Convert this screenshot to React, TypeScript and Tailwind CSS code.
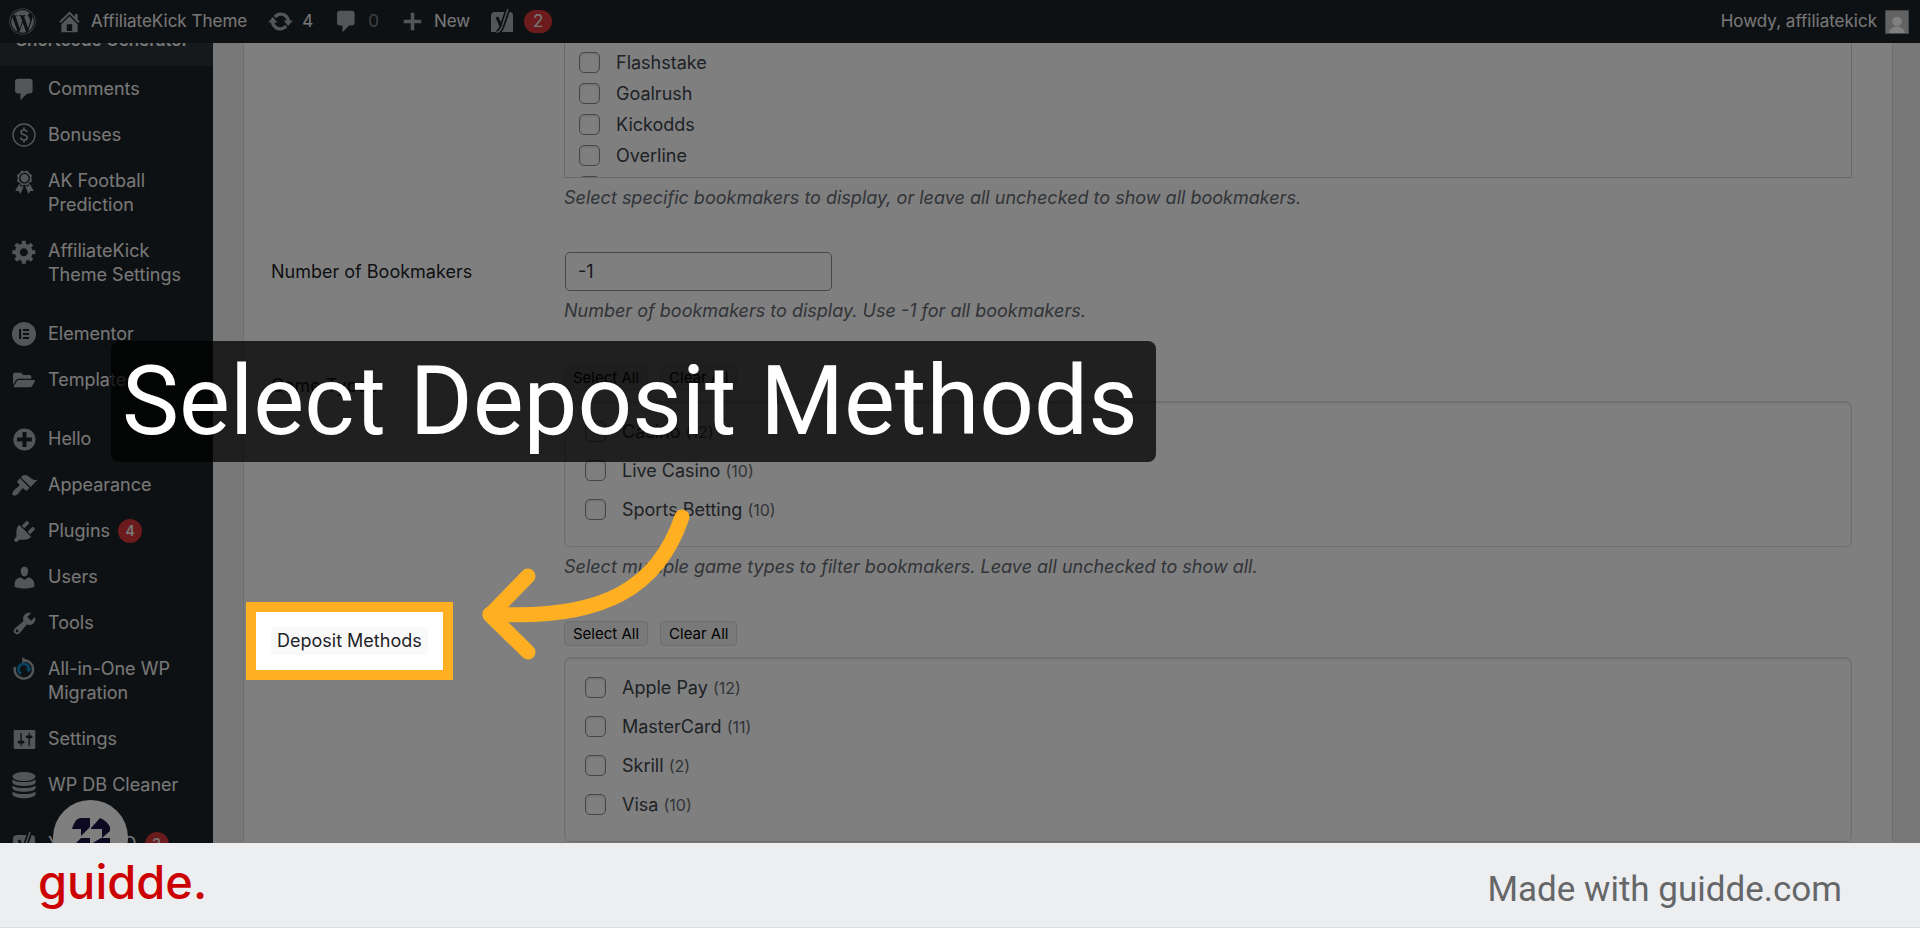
import type { ReactNode } from "react";
import { FaFolderOpen, FaWordpress } from "react-icons/fa";

type IconProps = { className?: string };

function Dashicon({ d, className = "size-[27px]" }: { d: string; className?: string }) {
  return (
    <svg viewBox="0 0 20 20" fill="currentColor" fillRule="evenodd" aria-hidden="true" className={className}>
      <path d={d} />
    </svg>
  );
}

const icons = {
  home: "M16 8.5l1.53 1.53-1.06 1.06L10 4.6l-6.47 6.49-1.06-1.06L10 2.5l4 4v-2h2v4zm-6-2.46l6 5.99V18H4v-5.97zM12 17v-5H8v5h4z",
  update:
    "M10.2 3.28c3.53 0 6.43 2.61 6.92 6h2.08l-3.5 4-3.5-4h2.32c-.45-1.97-2.21-3.45-4.32-3.45-1.45 0-2.73.71-3.54 1.78L4.95 5.66C6.23 4.2 8.11 3.28 10.2 3.28zm-.4 13.44c-3.52 0-6.43-2.61-6.92-6H.8l3.5-4c1.17 1.33 2.33 2.67 3.5 4H5.48c.45 1.97 2.21 3.45 4.32 3.45 1.45 0 2.73-.71 3.54-1.78l1.71 1.95c-1.28 1.46-3.15 2.38-5.25 2.38z",
  comments: "M5 2h9c1.1 0 2 .9 2 2v7c0 1.1-.9 2-2 2h-2l-5 5v-5H5c-1.1 0-2-.9-2-2V4c0-1.1.9-2 2-2z",
  plus: "M16.5 8.7v2.6h-5.2v5.2H8.7v-5.2H3.5V8.7h5.2V3.5h2.6v5.2z",
  awards:
    "M4.46 5.16L5 7.46l-.54 2.29 2.01 1.24L7.7 13l2.3-.54 2.3.54 1.23-2.01 2.01-1.24L15 7.46l.54-2.3-2-1.24-1.24-2.01-2.3.55-2.29-.54-1.25 2zm5.55 6.34c-2.21 0-4-1.79-4-4 0-2.2 1.79-4 4-4 2.2 0 4 1.8 4 4 0 2.21-1.8 4-4 4zm-.02-1C8.33 10.5 7 9.16 7 7.5c0-1.65 1.33-3 2.99-3S13 5.85 13 7.5c0 1.66-1.35 3-3.01 3zm3.84 1.1l-1.28 2.24-2.08-.47L13 19.2l1.4-2.2h2.5zm-7.7.07l1.25 2.25 2.13-.51L7 19.2 5.6 17H3.1z",
  generic:
    "M18 12h-2.18c-.17.7-.44 1.35-.81 1.93l1.54 1.54-2.1 2.1-1.54-1.54c-.58.36-1.23.63-1.91.79V19H8v-2.18c-.68-.16-1.33-.43-1.91-.79l-1.54 1.54-2.12-2.12 1.54-1.54c-.36-.58-.63-1.23-.79-1.91H1V9.03h2.17c.16-.7.44-1.35.8-1.94L2.43 5.55l2.1-2.1 1.54 1.54c.58-.37 1.24-.64 1.93-.81V2h3v2.18c.68.16 1.33.43 1.91.79l1.54-1.54 2.12 2.12-1.54 1.54c.36.59.64 1.24.8 1.94H18V12zm-8.5 1.5c1.66 0 3-1.34 3-3s-1.34-3-3-3-3 1.34-3 3 1.34 3 3 3z",
  plusAlt:
    "M15.8 4.2c3.2 3.21 3.2 8.39 0 11.6-3.21 3.2-8.39 3.2-11.6 0C1 12.59 1 7.41 4.2 4.2 7.41 1 12.59 1 15.8 4.2zm-4.3 11.3v-4h4v-3h-4v-4h-3v4h-4v3h4v4h3z",
  appearance:
    "M14.48 11.06L7.41 3.99l1.5-1.5c.5-.56 2.3-.47 3.51.32 1.21.8 1.43 1.28 2.91 2.1 1.18.64 2.45 1.26 4.45.85zm-.71.71L6.7 4.7 4.93 6.47c-.39.39-.39 1.02 0 1.41l1.06 1.06c.39.39.39 1.03 0 1.42-.6.6-1.43 1.11-2.21 1.69-.35.26-.7.53-1.01.84C1.43 14.23.4 16.08 1.4 17.07c.99 1 2.84-.03 4.18-1.36.31-.31.58-.66.85-1.02.57-.78 1.08-1.61 1.69-2.21.39-.39 1.02-.39 1.41 0l1.06 1.06c.39.39 1.02.39 1.41 0z",
  plugins:
    "M13.11 4.36L9.87 7.6 8 5.73l3.24-3.24c.35-.34 1.05-.2 1.56.32.52.51.66 1.21.31 1.55zm-8 1.77l.91-1.12 9.01 9.01-1.19.84c-.71.71-2.63 1.16-3.82 1.16H6.14L4.9 17.26c-.59.59-1.54.59-2.12 0-.59-.58-.59-1.53 0-2.12l1.24-1.24v-3.88c0-1.13.4-3.19 1.09-3.89zm7.26 3.97l3.24-3.24c.34-.35 1.04-.21 1.55.31.52.51.66 1.21.31 1.55l-3.24 3.25z",
  users:
    "M10 9.25c-2.27 0-2.73-3.44-2.73-3.44C7 4.02 7.82 2 9.97 2c2.16 0 2.98 2.02 2.71 3.81 0 0-.41 3.44-2.68 3.44zm0 2.57L12.72 10c2.39 0 4.52 2.33 4.52 4.53v2.49s-3.65 1.13-7.24 1.13c-3.65 0-7.24-1.13-7.24-1.13v-2.49c0-2.25 1.94-4.48 4.47-4.48z",
  tools:
    "M16.68 9.77c-1.34 1.34-3.3 1.67-4.95.99l-5.41 6.52c-.99.99-2.59.99-3.58 0s-.99-2.59 0-3.57l6.52-5.42c-.68-1.65-.35-3.61.99-4.95 1.28-1.28 3.12-1.62 4.72-1.06l-2.89 2.89 2.82 2.82 2.86-2.87c.53 1.58.18 3.39-1.08 4.65zM3.81 16.21c.4.39 1.04.39 1.43 0 .4-.4.4-1.04 0-1.43-.39-.4-1.03-.4-1.43 0-.39.39-.39 1.03 0 1.43z",
  settings:
    "M18 16V4c0-.55-.45-1-1-1H3c-.55 0-1 .45-1 1v12c0 .55.45 1 1 1h14c.55 0 1-.45 1-1zM8 11h1c.55 0 1 .45 1 1s-.45 1-1 1H8v1.5c0 .28-.22.5-.5.5s-.5-.22-.5-.5V13H6c-.55 0-1-.45-1-1s.45-1 1-1h1V5.5c0-.28.22-.5.5-.5s.5.22.5.5V11zm5-2h-1c-.55 0-1-.45-1-1s.45-1 1-1h1V5.5c0-.28.22-.5.5-.5s.5.22.5.5V7h1c.55 0 1 .45 1 1s-.45 1-1 1h-1v5.5c0 .28-.22.5-.5.5s-.5-.22-.5-.5V9z",
};

function DollarIcon() {
  return (
    <svg viewBox="0 0 24 24" fill="none" stroke="currentColor" aria-hidden="true" className="size-6">
      <circle cx="12" cy="12" r="11" strokeWidth="1.4" />
      <path
        d="M15 9.2c-.2-1.4-1.3-2.2-3-2.2s-3 .9-3 2.3c0 3.3 6.2 1.7 6.2 5.2 0 1.5-1.3 2.5-3.2 2.5s-3.2-1-3.3-2.5M12 4.500v2.500M12 17v2.500"
        strokeWidth="1.7"
      />
    </svg>
  );
}

function ElementorIcon() {
  return (
    <svg viewBox="0 0 24 24" aria-hidden="true" className="size-6">
      <circle cx="12" cy="12" r="12" fill="currentColor" />
      <path d="M7 7h2.2v10H7zM11 7h6v2h-6zM11 11h6v2h-6zM11 15h6v2h-6z" fill="#1d2327" />
    </svg>
  );
}

function MigrationIcon() {
  return (
    <svg viewBox="0 0 24 24" fill="none" aria-hidden="true" className="size-6">
      <path d="M12 3.2A9.2 9.2 0 1 1 3 10" stroke="currentColor" strokeWidth="2.4" />
      <path d="M10 0l5 3.2L10.5 6.5z" fill="currentColor" />
      <path d="M9 16.8A5.3 5.3 0 1 1 17 12" stroke="#1285c4" strokeWidth="2.8" />
      <path d="M13.5 11.5H20l-3.2 4z" fill="#1285c4" />
    </svg>
  );
}

function DatabaseIcon() {
  return (
    <svg viewBox="0 0 24 27" fill="currentColor" aria-hidden="true" className="h-[27px] w-6">
      <ellipse cx="12" cy="4.5" rx="11.5" ry="4.5" />
      <path d="M.5 7.5c3 3.4 20 3.4 23 0v3.2c-2 4.4-21 4.4-23 0z" />
      <path d="M.5 13.5c3 3.4 20 3.4 23 0v3c-2 4.4-21 4.4-23 0z" />
      <path d="M.5 19.5c3 3.4 20 3.4 23 0v3c-2 5-21 5-23 0z" />
    </svg>
  );
}

function YoastIcon({ className = "h-[27px] w-6" }: IconProps) {
  return (
    <svg viewBox="0 0 24 27" fill="none" aria-hidden="true" className={className}>
      <path d="M5 4h15a3.5 3.5 0 0 1 3 3.5V24H1V8a4 4 0 0 1 4-4z" fill="currentColor" />
      <path d="M18 1L12 18.5c-1.2 3.6-2.7 5.6-5.5 5.9" stroke="#1d2327" strokeWidth="5" />
      <path d="M18 1L12 18.5c-1.2 3.6-2.7 5.6-5.5 5.9" stroke="currentColor" strokeWidth="1.4" />
      <path d="M7 9l4 9.5" stroke="#1d2327" strokeWidth="3" />
    </svg>
  );
}

type MenuItem = { label: string; icon: ReactNode; badge?: string; separated?: boolean };

const menu: MenuItem[] = [
  { label: "Comments", icon: <Dashicon d={icons.comments} /> },
  { label: "Bonuses", icon: <DollarIcon /> },
  { label: "AK Football Prediction", icon: <Dashicon d={icons.awards} /> },
  { label: "AffiliateKick Theme Settings", icon: <Dashicon d={icons.generic} /> },
  { label: "Elementor", icon: <ElementorIcon />, separated: true },
  { label: "Templates", icon: <FaFolderOpen className="size-[22px]" /> },
  { label: "Hello", icon: <Dashicon d={icons.plusAlt} />, separated: true },
  { label: "Appearance", icon: <Dashicon d={icons.appearance} /> },
  { label: "Plugins", icon: <Dashicon d={icons.plugins} />, badge: "4" },
  { label: "Users", icon: <Dashicon d={icons.users} /> },
  { label: "Tools", icon: <Dashicon d={icons.tools} /> },
  { label: "All-in-One WP Migration", icon: <MigrationIcon /> },
  { label: "Settings", icon: <Dashicon d={icons.settings} /> },
  { label: "WP DB Cleaner", icon: <DatabaseIcon /> },
  { label: "Yoast SEO", icon: <YoastIcon />, badge: "2", separated: true },
];

const bookmakers = ["Flashstake", "Goalrush", "Kickodds", "Overline"];

const gameTypes = [
  { name: "Casino", count: 12 },
  { name: "Live Casino", count: 10 },
  { name: "Sports Betting", count: 10 },
];

const depositMethods = [
  { name: "Apple Pay", count: 12 },
  { name: "MasterCard", count: 11 },
  { name: "Skrill", count: 2 },
  { name: "Visa", count: 10 },
];

function AdminBar() {
  return (
    <header className="relative z-[5] flex h-[43px] shrink-0 items-center justify-between bg-[#1d2327] pr-[11px] pl-[9px] text-[17px] text-[#f0f0f1]">
      <div className="flex items-center">
        <a href="#wp" aria-label="About WordPress" className="text-[#a7aaad]">
          <FaWordpress className="size-[27px]" />
        </a>
        <a href="#site" className="ml-5 flex items-center gap-2">
          <Dashicon d={icons.home} className="size-[27px] text-[#a7aaad]" />
          AffiliateKick Theme
        </a>
        <a href="#updates" className="ml-5 flex items-center gap-2">
          <Dashicon d={icons.update} className="size-[27px] text-[#a7aaad]" />4
        </a>
        <a href="#comments-bar" className="ml-5 flex items-center gap-2 text-[#a7aaad]">
          <Dashicon d={icons.comments} />
          <span className="opacity-70">0</span>
        </a>
        <a href="#new" className="ml-5 flex items-center gap-2">
          <Dashicon d={icons.plus} className="size-[27px] text-[#a7aaad]" />
          New
        </a>
        <a href="#yoast" aria-label="Yoast SEO, 2 notifications" className="ml-5 flex items-center gap-2.5">
          <YoastIcon className="h-[27px] w-6 text-[#a7aaad]" />
          <span className="flex h-[23px] w-7 items-center justify-center rounded-full bg-[#d63638]">2</span>
        </a>
      </div>
      <a href="#profile" className="flex items-center gap-2">
        Howdy, affiliatekick
        <svg viewBox="0 0 24 24" aria-hidden="true" className="size-6">
          <rect width="24" height="24" fill="#8c8f94" />
          <rect x="1" y="1" width="22" height="22" fill="#c5c5c5" />
          <circle cx="12" cy="11.5" r="4.8" fill="#fff" />
          <path d="M4 23c.8-4.5 4-6.3 8-6.3s7.2 1.8 8 6.3z" fill="#fff" />
        </svg>
      </a>
    </header>
  );
}

function Sidebar() {
  return (
    <nav className="-mt-5 w-[213px] shrink-0 bg-[#1d2327] text-lg leading-6 text-[#f0f0f1]">
      <a href="#shortcodes" className="block bg-[#2c3338] pt-[5px] pb-[14px] pl-4 text-[17px] leading-6 font-semibold">
        Shortcode Generator
      </a>
      {menu.map((item) => (
        <a
          key={item.label}
          href={"#" + item.label.toLowerCase().replace(/ /g, "-")}
          className={"flex py-[11px] pr-4 " + (item.separated ? "mt-[13px]" : "")}
        >
          <span className="flex h-6 w-12 shrink-0 items-center justify-center text-[#a7aaad]">{item.icon}</span>
          <span>{item.label}</span>
          {item.badge && (
            <span className="ml-2 flex size-6 items-center justify-center rounded-full bg-[#d63638] text-sm font-semibold">
              {item.badge}
            </span>
          )}
        </a>
      ))}
    </nav>
  );
}

function Checkbox({ label }: { label?: string }) {
  return (
    <input
      type="checkbox"
      aria-label={label}
      className="size-[21px] shrink-0 appearance-none rounded-[5px] border border-[#8c8f94] bg-white shadow-[inset_0_1px_3px_rgba(0,0,0,0.15)]"
    />
  );
}

function Description({ children }: { children: ReactNode }) {
  return <p className="mt-2 text-lg leading-6 text-[#646970] italic">{children}</p>;
}

function SmallButton({ children }: { children: ReactNode }) {
  return (
    <button
      type="button"
      className="h-[25px] rounded border border-[#ddd] bg-[#f3f3f3] px-2 text-[15px] leading-none text-black"
    >
      {children}
    </button>
  );
}

function TermPicker({ terms }: { terms: { name: string; count: number }[] }) {
  return (
    <>
      <div className="flex gap-3">
        <SmallButton>Select All</SmallButton>
        <SmallButton>Clear All</SmallButton>
      </div>
      <div className="mt-[11px] flex flex-col gap-[18px] rounded-md border border-[#ddd] bg-white px-5 pt-[19px] pb-[26px] shadow-[inset_0_1px_2px_rgba(0,0,0,0.15)]">
        {terms.map((term) => (
          <label key={term.name} className="flex h-[21px] items-center gap-4 text-lg text-[#3c434a]">
            <Checkbox />
            <span>
              {term.name} <span className="text-base text-[#646970]">({term.count})</span>
            </span>
          </label>
        ))}
      </div>
    </>
  );
}

function FieldRow({ label, children }: { label: ReactNode; children: ReactNode }) {
  return (
    <div className="mb-[42px] grid grid-cols-[293px_1fr] items-start">
      {label}
      <div>{children}</div>
    </div>
  );
}

function SettingsForm() {
  return (
    <main className="min-w-0 flex-1 bg-[#f0f0f1] pr-[27px] pl-[30px] text-lg">
      <form className="border-x border-[#dcdcde] bg-white pr-10 pl-[27px]">
        <FieldRow label={<span />}>
          <div className="flex h-[135px] flex-col gap-[10px] overflow-hidden border border-t-0 border-[#d0d0d0] px-[14px] pt-[9px]">
            {bookmakers.map((name) => (
              <label key={name} className="flex h-[21px] shrink-0 items-center gap-4 text-[#3c434a]">
                <Checkbox />
                {name}
              </label>
            ))}
            <Checkbox label="Next bookmaker" />
          </div>
          <Description>
            Select specific bookmakers to display, or leave all unchecked to show all bookmakers.
          </Description>
        </FieldRow>

        <FieldRow
          label={
            <label htmlFor="bookmaker-count" className="pt-2 leading-6 text-[#1d2327]">
              Number of Bookmakers
            </label>
          }
        >
          <input
            id="bookmaker-count"
            type="text"
            defaultValue="-1"
            className="ml-px block h-[39px] w-[267px] rounded-[5px] border border-[#8c8f94] bg-white px-3 text-[#2c3338]"
          />
          <Description>Number of bookmakers to display. Use -1 for all bookmakers.</Description>
        </FieldRow>

        <FieldRow label={<span className="pt-[9px] leading-6 text-[#1d2327]">Game Types</span>}>
          <TermPicker terms={gameTypes} />
          <Description>Select multiple game types to filter bookmakers. Leave all unchecked to show all.</Description>
        </FieldRow>

        {/* The spotlighted label sits above the dimmed layer */}
        <FieldRow
          label={
            <span className="relative z-20 -mt-[19px] -ml-[25px] w-fit border-10 border-[#ffb022] bg-white p-[15px] text-[#1d2327]">
              <span className="block rounded bg-[#f9f9f9] px-1.5 leading-7">Deposit Methods</span>
            </span>
          }
        >
          <TermPicker terms={depositMethods} />
        </FieldRow>
      </form>
    </main>
  );
}

function ChatBubble() {
  return (
    <button type="button" aria-label="Open helper" className="absolute top-[800px] left-[53px] z-[6] size-[75px] rounded-full bg-white">
      <svg viewBox="0 0 75 75" fill="#1b1340" aria-hidden="true">
        <path d="M19 29c2-6 4-11 9-11h9v9l-9 9v-7zM38 28l9-10c5 2 8 5 10 9v4l-8 7v-9H38zM22 44l6-6h9v16h-9V44zM38 44l10-6h9v16h-9V44z" />
      </svg>
    </button>
  );
}

export default function App() {
  return (
    <div className="flex h-screen flex-col font-[Inter,'Liberation_Sans',sans-serif]">
      <div className="relative flex min-h-0 flex-1 flex-col overflow-hidden">
        <AdminBar />
        <div className="flex min-h-0 flex-1">
          <Sidebar />
          <SettingsForm />
        </div>
        <ChatBubble />

        {/* Dimmed layer, caption and pointer */}
        <div className="absolute inset-0 z-10 bg-black/50" />
        <h1 className="absolute top-[341px] left-[111px] z-20 rounded-lg bg-black/75 pr-[18px] pl-[11px] font-[Roboto,sans-serif] text-8xl leading-[121px] whitespace-nowrap text-white">
          Select Deposit Methods
        </h1>
        <svg
          viewBox="0 0 220 160"
          fill="none"
          stroke="#ffb022"
          strokeWidth="15"
          strokeLinecap="round"
          strokeLinejoin="round"
          aria-hidden="true"
          className="absolute top-[505px] left-[475px] z-20 h-40 w-[220px]"
        >
          <path d="M207 12C184 80 132 116 15 109" />
          <path d="M53 71L15 110l38 37" />
        </svg>
      </div>

      <footer className="flex h-[85px] shrink-0 items-center justify-between border-b border-[#dcdde0] bg-[#edeef0] pr-[78px] pl-[38px]">
        <a href="#guidde" className="pb-2 text-[47px] leading-none font-medium text-[#cc0000]">
          guidde.
        </a>
        <p className="pt-2 font-[Roboto,sans-serif] text-[35px] leading-none text-[#646668]">Made with guidde.com</p>
      </footer>
    </div>
  );
}
